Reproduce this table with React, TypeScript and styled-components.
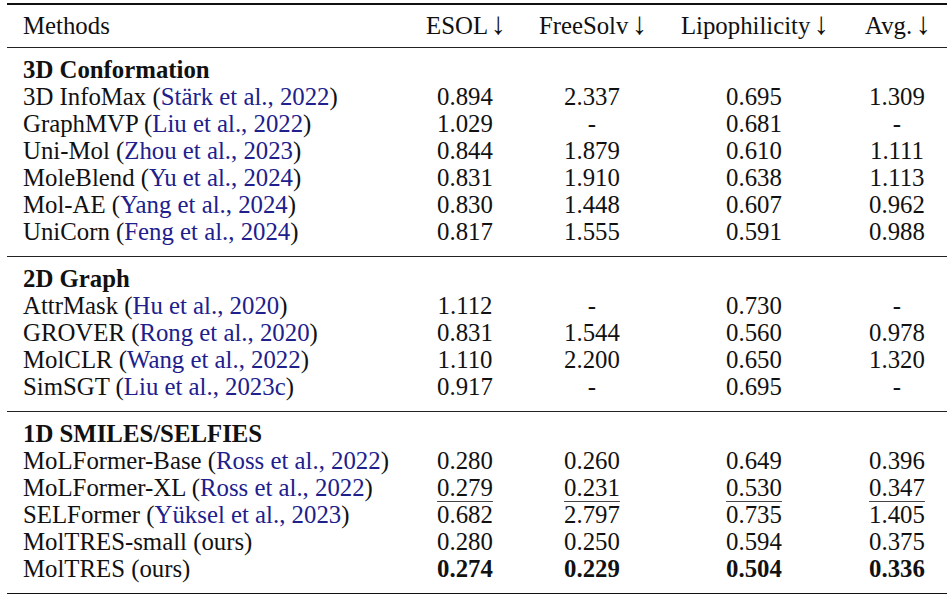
import React from "react"
import styled, { createGlobalStyle } from "styled-components"

const GlobalStyle = createGlobalStyle`
  html, body {
    margin: 0;
    padding: 0;
    background: #fff;
  }
`

type Row = {
  name: string
  cite?: string
  values: string[]
  under?: boolean
  bold?: boolean
}

type Section = {
  title: string
  rows: Row[]
}

const sections: Section[] = [
  {
    title: "3D Conformation",
    rows: [
      { name: "3D InfoMax", cite: "Stärk et al., 2022", values: ["0.894", "2.337", "0.695", "1.309"] },
      { name: "GraphMVP", cite: "Liu et al., 2022", values: ["1.029", "-", "0.681", "-"] },
      { name: "Uni-Mol", cite: "Zhou et al., 2023", values: ["0.844", "1.879", "0.610", "1.111"] },
      { name: "MoleBlend", cite: "Yu et al., 2024", values: ["0.831", "1.910", "0.638", "1.113"] },
      { name: "Mol-AE", cite: "Yang et al., 2024", values: ["0.830", "1.448", "0.607", "0.962"] },
      { name: "UniCorn", cite: "Feng et al., 2024", values: ["0.817", "1.555", "0.591", "0.988"] },
    ],
  },
  {
    title: "2D Graph",
    rows: [
      { name: "AttrMask", cite: "Hu et al., 2020", values: ["1.112", "-", "0.730", "-"] },
      { name: "GROVER", cite: "Rong et al., 2020", values: ["0.831", "1.544", "0.560", "0.978"] },
      { name: "MolCLR", cite: "Wang et al., 2022", values: ["1.110", "2.200", "0.650", "1.320"] },
      { name: "SimSGT", cite: "Liu et al., 2023c", values: ["0.917", "-", "0.695", "-"] },
    ],
  },
  {
    title: "1D SMILES/SELFIES",
    rows: [
      { name: "MoLFormer-Base", cite: "Ross et al., 2022", values: ["0.280", "0.260", "0.649", "0.396"] },
      { name: "MoLFormer-XL", cite: "Ross et al., 2022", values: ["0.279", "0.231", "0.530", "0.347"], under: true },
      { name: "SELFormer", cite: "Yüksel et al., 2023", values: ["0.682", "2.797", "0.735", "1.405"] },
      { name: "MolTRES-small (ours)", values: ["0.280", "0.250", "0.594", "0.375"] },
      { name: "MolTRES (ours)", values: ["0.274", "0.229", "0.504", "0.336"], bold: true },
    ],
  },
]

const columns = ["ESOL", "FreeSolv", "Lipophilicity", "Avg."]

export default function App() {
  return (
    <Page>
      <GlobalStyle />
      <Table>
        <colgroup>
          <col style={{ width: 400 }} />
          <col style={{ width: 116 }} />
          <col style={{ width: 138 }} />
          <col style={{ width: 186 }} />
          <col style={{ width: 100 }} />
        </colgroup>
        <Head>
          <tr>
            <HeadCell $left>Methods</HeadCell>
            {columns.map((c) => (
              <HeadCell key={c}>
                {c} <Arrow>↓</Arrow>
              </HeadCell>
            ))}
          </tr>
        </Head>
        {sections.map((s) => (
          <Body key={s.title}>
            <tr>
              <Cell $left>
                <b>{s.title}</b>
              </Cell>
              <Cell colSpan={4} />
            </tr>
            {s.rows.map((r) => (
              <tr key={r.name}>
                <Cell $left>
                  {r.cite ? (
                    <>
                      {r.name} (<Cite>{r.cite}</Cite>)
                    </>
                  ) : (
                    r.name
                  )}
                </Cell>
                {r.values.map((v, i) => (
                  <Cell key={i}>
                    {r.under ? <Under>{v}</Under> : r.bold ? <b>{v}</b> : v}
                  </Cell>
                ))}
              </tr>
            ))}
          </Body>
        ))}
      </Table>
    </Page>
  )
}

const Page = styled.div`
  padding: 3px 0 0 7px;
  font-family: "Liberation Serif", "Times New Roman", serif;
  font-size: 24.8px;
  color: #111;
`

const Table = styled.table`
  width: 940px;
  table-layout: fixed;
  border-collapse: collapse;
  border-bottom: 2px solid #111;
  line-height: 27px;
`

const Head = styled.thead`
  > tr {
    border-top: 2px solid #111;
    border-bottom: 1px solid #222;
  }
  th {
    padding-top: 7px;
    padding-bottom: 8px;
  }
`

const HeadCell = styled.th<{ $left?: boolean }>`
  font-weight: normal;
  white-space: nowrap;
  text-align: ${(p) => (p.$left ? "left" : "center")};
  padding-left: ${(p) => (p.$left ? "16px" : "0")};
  padding-right: 0;
`

const Arrow = styled.span`
  font-size: 1.25em;
  line-height: 0;
  margin-left: -3px;
  margin-right: -2px;
`

const Body = styled.tbody`
  & + & {
    border-top: 1px solid #222;
  }
  > tr:first-child > td {
    padding-top: 8px;
  }
  > tr:last-child > td {
    padding-bottom: 11px;
  }
`

const Cell = styled.td<{ $left?: boolean }>`
  padding: 0;
  padding-left: ${(p) => (p.$left ? "16px" : "0")};
  white-space: nowrap;
  text-align: ${(p) => (p.$left ? "left" : "center")};
`

const Cite = styled.span`
  color: #20208c;
`

const Under = styled.span`
  text-decoration: underline;
  text-decoration-thickness: 1px;
  text-underline-offset: 5px;
  text-decoration-color: #444;
`
